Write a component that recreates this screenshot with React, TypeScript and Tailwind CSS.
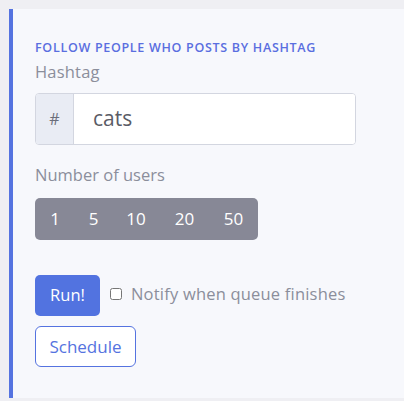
import { useState } from 'react';

const counts = [
  { v: '1', w: 'w-[40px]' },
  { v: '5', w: 'w-[37px]' },
  { v: '10', w: 'w-[48px]' },
  { v: '20', w: 'w-[49px]' },
  { v: '50', w: 'w-[49px]' },
];

export default function App() {
  const [tag, setTag] = useState('cats');
  return (
    <div
      className="w-full h-[401px] bg-[#efeff3] pt-[9px] pl-[9px] overflow-hidden"
      style={{ fontFamily: '"Open Sans", "Liberation Sans", sans-serif' }}
    >
      <div className="h-[389px] border-l-4 border-[#5573e0] bg-[#f7f8fc] pl-[22px] pt-[31px]">
        <h3 className="text-[12.5px] leading-[15px] font-semibold uppercase text-[#5a6ee0] tracking-[0.7px] whitespace-nowrap">
          Follow people who posts by hashtag
        </h3>
        <label className="block mt-[6px] text-[16.5px] leading-[22px] text-[#8b8e9b] tracking-[0.2px]">Hashtag</label>
        <div className="flex mt-[10px] w-[321px] h-[52px] rounded border border-[#d3d6e0] bg-white overflow-hidden">
          <span className="flex shrink-0 items-center justify-center w-[38px] bg-[#e9ecf4] border-r border-[#d3d6e0] text-[16px] text-[#6b6e7a]">
            #
          </span>
          <input
            value={tag}
            onChange={(e) => setTag(e.target.value)}
            className="flex-1 min-w-0 pl-[19px] text-[21px] text-[#5a5c66] outline-none bg-white"
          />
        </div>
        <label className="block mt-[19px] text-[16.5px] leading-[22px] text-[#8b8e9b]">Number of users</label>
        <div className="inline-flex mt-[12px] h-[42px] rounded-[5px] bg-[#878896] overflow-hidden">
          {counts.map((c) => (
            <button key={c.v} className={`${c.w} text-[17px] text-white`}>
              {c.v}
            </button>
          ))}
        </div>
        <div className="flex items-start mt-[35px]">
          <button className="w-[65px] h-[41px] rounded-[5px] bg-[#5273e0] text-white text-[16.5px]">Run!</button>
          <label className="flex items-center ml-[10px] mt-[8px] text-[16.5px] leading-[22px] text-[#8b8e9b] tracking-[0.2px]">
            <input type="checkbox" className="w-[12px] h-[12px] mr-[9px]" />
            Notify when queue finishes
          </label>
        </div>
        <button className="mt-[10px] w-[101px] h-[41px] rounded-[6px] border border-[#5573e0] bg-white text-[#5573e0] text-[17px]">
          Schedule
        </button>
      </div>
    </div>
  );
}
